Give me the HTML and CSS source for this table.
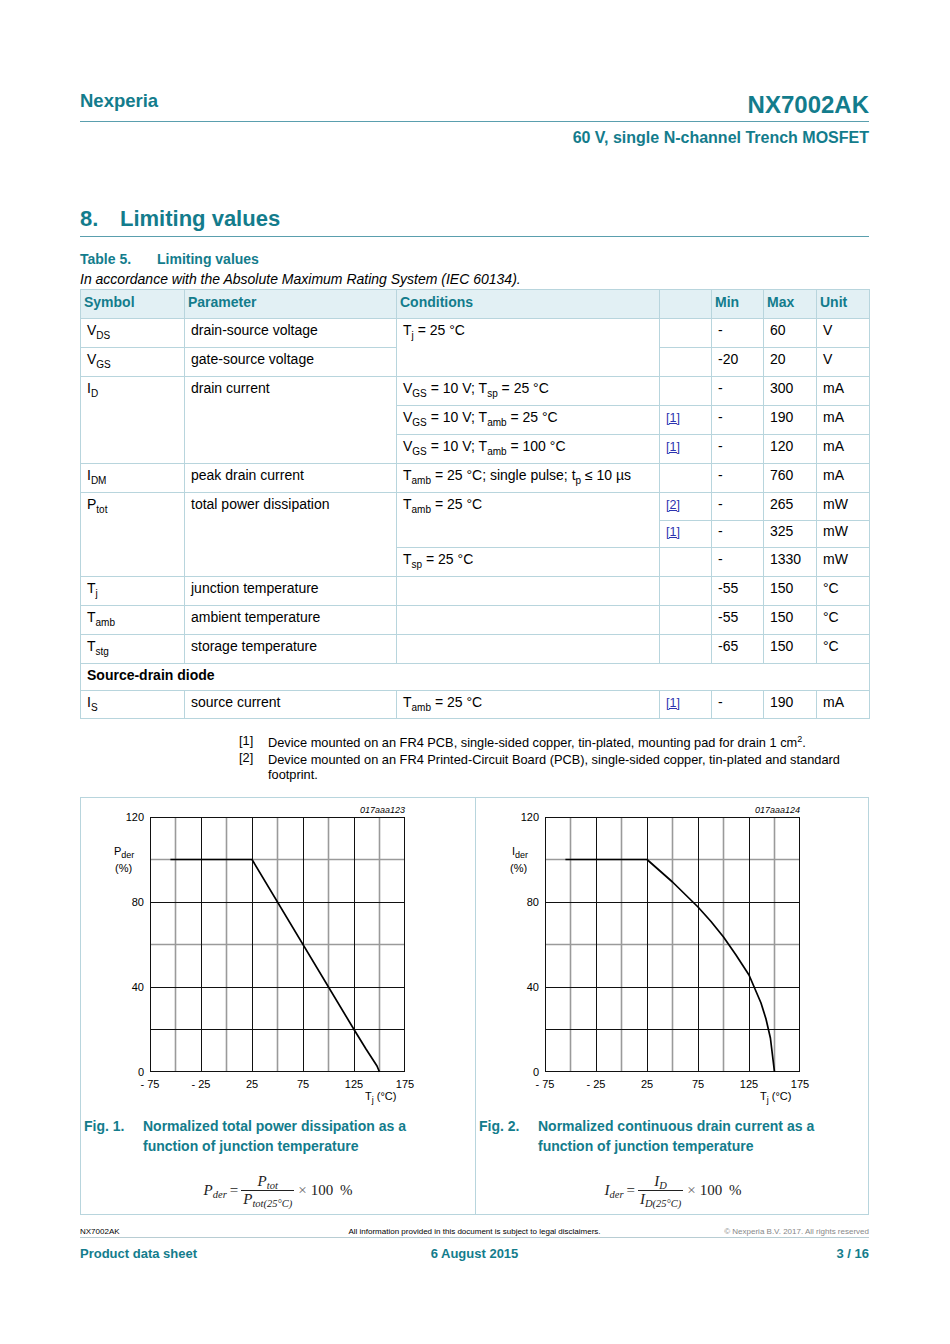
FILE: index.html
```html
<!DOCTYPE html>
<html>
<head>
<meta charset="utf-8">
<link rel="stylesheet" href="styles.css">
</head>
<body>
<div class="page">
  <header class="top">
    <div class="top-row">
      <span class="brand">Nexperia</span>
      <span class="part">NX7002AK</span>
    </div>
    <div class="subtitle">60 V, single N-channel Trench MOSFET</div>
  </header>

  <h2 class="section"><span class="num">8.</span><span>Limiting values</span></h2>

  <div class="tcap"><span class="tnum">Table 5.</span><span>Limiting values</span></div>
  <div class="tsub">In accordance with the Absolute Maximum Rating System (IEC 60134).</div>

  <table class="lv">
    <colgroup>
      <col class="c1"><col class="c2"><col class="c3"><col class="c4"><col class="c5"><col class="c6"><col class="c7">
    </colgroup>
    <thead>
      <tr><th>Symbol</th><th>Parameter</th><th>Conditions</th><th></th><th>Min</th><th>Max</th><th>Unit</th></tr>
    </thead>
    <tbody>
      <tr><td>V<sub>DS</sub></td><td>drain-source voltage</td><td rowspan="2">T<sub>j</sub> = 25 °C</td><td></td><td>-</td><td>60</td><td>V</td></tr>
      <tr><td>V<sub>GS</sub></td><td>gate-source voltage</td><td></td><td>-20</td><td>20</td><td>V</td></tr>
      <tr><td rowspan="3">I<sub>D</sub></td><td rowspan="3">drain current</td><td>V<sub>GS</sub> = 10 V; T<sub>sp</sub> = 25 °C</td><td></td><td>-</td><td>300</td><td>mA</td></tr>
      <tr><td>V<sub>GS</sub> = 10 V; T<sub>amb</sub> = 25 °C</td><td><a class="ref">[1]</a></td><td>-</td><td>190</td><td>mA</td></tr>
      <tr><td>V<sub>GS</sub> = 10 V; T<sub>amb</sub> = 100 °C</td><td><a class="ref">[1]</a></td><td>-</td><td>120</td><td>mA</td></tr>
      <tr><td>I<sub>DM</sub></td><td>peak drain current</td><td>T<sub>amb</sub> = 25 °C; single pulse; t<sub>p</sub> ≤ 10 µs</td><td></td><td>-</td><td>760</td><td>mA</td></tr>
      <tr class="h28"><td rowspan="3">P<sub>tot</sub></td><td rowspan="3">total power dissipation</td><td rowspan="2">T<sub>amb</sub> = 25 °C</td><td><a class="ref">[2]</a></td><td>-</td><td>265</td><td>mW</td></tr>
      <tr class="h27"><td class="mid"><a class="ref">[1]</a></td><td class="mid">-</td><td class="mid">325</td><td class="mid">mW</td></tr>
      <tr><td>T<sub>sp</sub> = 25 °C</td><td></td><td>-</td><td>1330</td><td>mW</td></tr>
      <tr><td>T<sub>j</sub></td><td>junction temperature</td><td></td><td></td><td>-55</td><td>150</td><td>°C</td></tr>
      <tr><td>T<sub>amb</sub></td><td>ambient temperature</td><td></td><td></td><td>-55</td><td>150</td><td>°C</td></tr>
      <tr><td>T<sub>stg</sub></td><td>storage temperature</td><td></td><td></td><td>-65</td><td>150</td><td>°C</td></tr>
      <tr class="h27"><td colspan="7" class="group">Source-drain diode</td></tr>
      <tr class="h28"><td>I<sub>S</sub></td><td>source current</td><td>T<sub>amb</sub> = 25 °C</td><td><a class="ref">[1]</a></td><td>-</td><td>190</td><td>mA</td></tr>
    </tbody>
  </table>

  <div class="notes">
    <div class="note"><span class="mark">[1]</span><span class="ntext">Device mounted on an FR4 PCB, single-sided copper, tin-plated, mounting pad for drain 1 cm<sup>2</sup>.</span></div>
    <div class="note"><span class="mark">[2]</span><span class="ntext">Device mounted on an FR4 Printed-Circuit Board (PCB), single-sided copper, tin-plated and standard footprint.</span></div>
  </div>

  <div class="figs">
    <div class="fig">
      <svg class="chart" width="394" height="310" viewBox="0 0 394 310">
        <g class="grid-minor">
          <line x1="94.5" y1="19" x2="94.5" y2="274"/><line x1="145.5" y1="19" x2="145.5" y2="274"/><line x1="196.5" y1="19" x2="196.5" y2="274"/><line x1="247.5" y1="19" x2="247.5" y2="274"/><line x1="298.5" y1="19" x2="298.5" y2="274"/>
          <line x1="69" y1="61.5" x2="324" y2="61.5"/><line x1="69" y1="146.5" x2="324" y2="146.5"/>
        </g>
        <g class="grid-major">
          <line x1="120.5" y1="19" x2="120.5" y2="274"/><line x1="171.5" y1="19" x2="171.5" y2="274"/><line x1="222.5" y1="19" x2="222.5" y2="274"/><line x1="273.5" y1="19" x2="273.5" y2="274"/>
          <line x1="69" y1="104.5" x2="324" y2="104.5"/><line x1="69" y1="189.5" x2="324" y2="189.5"/><line x1="69" y1="231.5" x2="324" y2="231.5"/>
          <rect x="69.5" y="19.5" width="254" height="254" fill="none"/>
        </g>
        <polyline class="curve" points="89.4,61.5 171,61.5 273,231.5 285,251 296,268 298.5,274"/>
        <g class="ylab">
          <text x="63" y="23">120</text><text x="63" y="108">80</text><text x="63" y="193">40</text><text x="63" y="278">0</text>
        </g>
        <text class="qlab" x="33" y="57">P<tspan class="sb" dy="3">der</tspan></text>
        <text class="qlab" x="34" y="74">(%)</text>
        <g class="xlab">
          <text x="69" y="290">- 75</text><text x="120" y="290">- 25</text><text x="171" y="290">25</text><text x="222" y="290">75</text><text x="273" y="290">125</text><text x="324" y="290">175</text>
        </g>
        <text class="qlab" x="284" y="302">T<tspan class="sb" dy="3">j</tspan><tspan dy="-3"> (°C)</tspan></text>
        <text class="code" x="324" y="15">017aaa123</text>
      </svg>
      <div class="figcap"><span class="fnum">Fig. 1.</span><span class="ftitle">Normalized total power dissipation as a function of junction temperature</span></div>
      <div class="formula">
        <span class="v">P<sub>der</sub></span><span class="eq">=</span>
        <span class="frac"><span class="fn v">P<sub>tot</sub></span><span class="fd v">P<sub>tot(25°C)</sub></span></span>
        <span class="times">×</span><span class="up">100 %</span>
      </div>
    </div>
    <div class="fig">
      <svg class="chart" width="394" height="310" viewBox="0 0 394 310">
        <g class="grid-minor">
          <line x1="94.5" y1="19" x2="94.5" y2="274"/><line x1="145.5" y1="19" x2="145.5" y2="274"/><line x1="196.5" y1="19" x2="196.5" y2="274"/><line x1="247.5" y1="19" x2="247.5" y2="274"/><line x1="298.5" y1="19" x2="298.5" y2="274"/>
          <line x1="69" y1="61.5" x2="324" y2="61.5"/><line x1="69" y1="146.5" x2="324" y2="146.5"/>
        </g>
        <g class="grid-major">
          <line x1="120.5" y1="19" x2="120.5" y2="274"/><line x1="171.5" y1="19" x2="171.5" y2="274"/><line x1="222.5" y1="19" x2="222.5" y2="274"/><line x1="273.5" y1="19" x2="273.5" y2="274"/>
          <line x1="69" y1="104.5" x2="324" y2="104.5"/><line x1="69" y1="189.5" x2="324" y2="189.5"/><line x1="69" y1="231.5" x2="324" y2="231.5"/>
          <rect x="69.5" y="19.5" width="254" height="254" fill="none"/>
        </g>
        <polyline class="curve" points="89.4,61.5 171,61.5 196.5,84 222,109 235,123.5 247.5,139 260,157 273,177 285,205 290,221 294.4,240 298.5,274"/>
        <g class="ylab">
          <text x="63" y="23">120</text><text x="63" y="108">80</text><text x="63" y="193">40</text><text x="63" y="278">0</text>
        </g>
        <text class="qlab" x="36" y="57">I<tspan class="sb" dy="3">der</tspan></text>
        <text class="qlab" x="34" y="74">(%)</text>
        <g class="xlab">
          <text x="69" y="290">- 75</text><text x="120" y="290">- 25</text><text x="171" y="290">25</text><text x="222" y="290">75</text><text x="273" y="290">125</text><text x="324" y="290">175</text>
        </g>
        <text class="qlab" x="284" y="302">T<tspan class="sb" dy="3">j</tspan><tspan dy="-3"> (°C)</tspan></text>
        <text class="code" x="324" y="15">017aaa124</text>
      </svg>
      <div class="figcap"><span class="fnum">Fig. 2.</span><span class="ftitle">Normalized continuous drain current as a function of junction temperature</span></div>
      <div class="formula">
        <span class="v">I<sub>der</sub></span><span class="eq">=</span>
        <span class="frac"><span class="fn v">I<sub>D</sub></span><span class="fd v">I<sub>D(25°C)</sub></span></span>
        <span class="times">×</span><span class="up">100 %</span>
      </div>
    </div>
  </div>

  <footer class="foot">
    <div class="foot-small">
      <span class="l">NX7002AK</span>
      <span class="c">All information provided in this document is subject to legal disclaimers.</span>
      <span class="r copy">© Nexperia B.V. 2017. All rights reserved</span>
    </div>
    <div class="foot-main">
      <span class="l">Product data sheet</span>
      <span class="c">6 August 2015</span>
      <span class="r">3 / 16</span>
    </div>
  </footer>
</div>
</body>
</html>
```

FILE: styles.css
```css
* { box-sizing: border-box; }
html, body { margin: 0; padding: 0; background: #fff; }
body {
  font-family: "Liberation Sans", Arial, sans-serif;
  color: #000;
  width: 950px;
  height: 1344px;
  overflow: hidden;
}
.page {
  width: 789px;
  margin-left: 80px;
  padding-top: 89px;
}

/* header */
.top-row {
  display: flex;
  justify-content: space-between;
  align-items: flex-end;
  height: 33px;
  border-bottom: 1px solid #5a9fae;
  padding-bottom: 3px;
}
.brand { color: #137c8c; font-weight: bold; font-size: 18.5px; line-height: 22px; margin-bottom: 6px; }
.part { color: #137c8c; font-weight: bold; font-size: 24px; line-height: 26px; }
.subtitle {
  text-align: right;
  color: #137c8c;
  font-weight: bold;
  font-size: 16px;
  line-height: 18px;
  margin-top: 7px;
}

/* section */
.section {
  margin: 59px 0 0 0;
  color: #137c8c;
  font-size: 22px;
  font-weight: bold;
  line-height: 26px;
  padding-bottom: 4px;
  border-bottom: 1px solid #5a9fae;
  display: flex;
}
.section .num { width: 40px; }

.tcap {
  margin-top: 13px;
  color: #137c8c;
  font-weight: bold;
  font-size: 14px;
  line-height: 18px;
  display: flex;
}
.tcap .tnum { width: 77px; }
.tsub {
  font-style: italic;
  font-size: 14px;
  line-height: 18px;
  margin-top: 2px;
}

/* table */
table.lv {
  border-collapse: collapse;
  width: 789px;
  table-layout: fixed;
  margin-top: 1px;
  font-size: 14px;
}
.lv col.c1 { width: 104px; }
.lv col.c2 { width: 212px; }
.lv col.c3 { width: 263px; }
.lv col.c4 { width: 52px; }
.lv col.c5 { width: 52px; }
.lv col.c6 { width: 53px; }
.lv col.c7 { width: 53px; }
.lv th, .lv td {
  border: 1px solid #b8d5dd;
  text-align: left;
  vertical-align: top;
  line-height: 17px;
  padding: 3px 6px 0 6px;
}
.lv th {
  background: #e2f0f4;
  color: #137c8c;
  font-weight: bold;
  padding: 4px 3px 0 3px;
  height: 27px;
}
.lv tr { height: 29px; }
.lv tr.h28 { height: 28px; }
.lv tr.h27 { height: 27px; }
.lv td.mid { padding-top: 2px; }
.lv sub {
  font-size: 10px;
  line-height: 0;
  vertical-align: -4px;
}
.lv td.group { font-weight: bold; padding-top: 3px; }
.ref { color: #2b33b0; text-decoration: underline; text-decoration-thickness: 1px; font-size: 12.5px; }

/* notes */
.notes {
  margin-top: 16px;
  margin-left: 159px;
  font-size: 12.8px;
  line-height: 15px;
}
.note { display: flex; margin-bottom: 2px; }
.note .mark { width: 29px; flex: none; position: relative; top: -2px; }
.note .ntext { width: 601px; }
.note sup { font-size: 9px; line-height: 0; vertical-align: 5px; }

/* figures */
.figs {
  margin-top: 15px;
  display: grid;
  grid-template-columns: 394px 395px;
  border: 1px solid #b8d5dd;
  height: 418px;
}
.fig { position: relative; }
.fig + .fig { border-left: 1px solid #b8d5dd; }
.chart { display: block; font-family: "Liberation Sans", Arial, sans-serif; }
.grid-minor line { stroke: #9a9a9a; stroke-width: 1.6; }
.grid-major line, .grid-major rect { stroke: #111; stroke-width: 1; }
.curve { fill: none; stroke: #000; stroke-width: 1.7; stroke-linejoin: round; }
.ylab text { font-size: 11px; text-anchor: end; fill: #000; }
.xlab text { font-size: 11px; text-anchor: middle; fill: #000; }
.qlab { font-size: 11px; fill: #000; }
.qlab .sb { font-size: 9px; }
.code { font-size: 9px; font-style: italic; text-anchor: end; fill: #000; }

.figcap {
  margin-top: 8px;
  display: flex;
  color: #137c8c;
  font-weight: bold;
  font-size: 14px;
  line-height: 20px;
  padding-left: 3px;
}
.figcap .fnum { width: 59px; flex: none; }
.figcap .ftitle { width: 290px; }

.formula {
  margin-top: 17px;
  display: flex;
  justify-content: center;
  align-items: center;
  font-family: "Liberation Serif", "Times New Roman", serif;
  font-size: 15px;
  color: #222;
}
.formula .v { font-style: italic; }
.formula sub { font-size: 10.5px; font-style: italic; line-height: 0; vertical-align: -3px; }
.formula .eq { margin: 0 3px 0 3px; }
.frac { display: inline-flex; flex-direction: column; align-items: center; }
.frac .fn { border-bottom: 1px solid #222; padding: 0 2px 1px; line-height: 16px; align-self: stretch; text-align: center; }
.frac .fd { line-height: 17px; padding: 0 2px; }
.formula .times { margin: 0 4px 0 4px; color: #666; font-size: 15px; }
.formula .up { font-style: normal; word-spacing: 3px; }

/* footer */
.foot { margin-top: 12px; }
.foot-small, .foot-main {
  display: grid;
  grid-template-columns: 1fr auto 1fr;
}
.foot-small {
  font-size: 8px;
  line-height: 9px;
  padding-bottom: 1px;
  border-bottom: 1px solid #b8cdd3;
}
.foot .r { text-align: right; }
.foot-small .copy { color: #888; }
.foot-main {
  color: #137c8c;
  font-weight: bold;
  font-size: 13px;
  line-height: 16px;
  margin-top: 8px;
}
```
